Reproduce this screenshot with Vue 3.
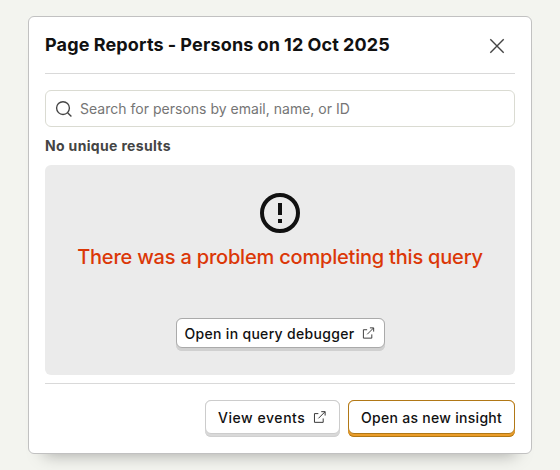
<script setup>
const title = 'Page Reports - Persons on 12 Oct 2025'
</script>

<template>
  <div class="page">
    <section class="modal" role="dialog" :aria-label="title">
      <header class="head">
        <h3>{{ title }}</h3>
        <button class="close" aria-label="close">
          <svg viewBox="0 0 24 24" width="24" height="24" fill="none" stroke="currentColor" stroke-width="1.4">
            <path d="M5.3 5.3l13.4 13.4M18.7 5.3l-13.4 13.4" />
          </svg>
        </button>
      </header>
      <label class="search">
        <svg viewBox="0 0 18 18" width="18" height="18" fill="none" stroke="currentColor" stroke-width="1.35">
          <circle cx="8" cy="8.1" r="6.4" />
          <path d="M12.6 12.7l3.8 3.8" />
        </svg>
        <input type="text" placeholder="Search for persons by email, name, or ID" />
      </label>
      <div class="count">No unique results</div>
      <div class="error">
        <svg class="warn" viewBox="0 0 40 40" width="40" height="40">
          <circle cx="20" cy="20" r="18" fill="none" stroke="#111" stroke-width="4" />
          <path d="M18 10h4v12h-4zM18 26h4v4h-4z" fill="#111" />
        </svg>
        <h2>There was a problem completing this query</h2>
        <button class="btn small">
          <span class="face">
            <span>Open in query debugger</span>
            <svg viewBox="0 0 14 14" width="14" height="14" fill="none" stroke="currentColor" stroke-width="1">
              <path d="M5.5 3.5h-4v9h9V8.5M8.5 1.5h4v4M12.3 1.7L5.6 8.4" />
            </svg>
          </span>
        </button>
      </div>
      <footer class="foot">
        <button class="btn">
          <span class="face">
            <span>View events</span>
            <svg viewBox="0 0 14 14" width="14" height="14" fill="none" stroke="currentColor" stroke-width="1">
              <path d="M5.5 3.5h-4v9h9V8.5M8.5 1.5h4v4M12.3 1.7L5.6 8.4" />
            </svg>
          </span>
        </button>
        <button class="btn primary">
          <span class="face"><span>Open as new insight</span></span>
        </button>
      </footer>
    </section>
  </div>
</template>

<style>
body {
  background: #f3f4ef;
}
</style>

<style scoped>
.page {
  box-sizing: border-box;
  height: 470px;
  padding: 16px 28px;
  overflow: hidden;
  font-family: Inter, sans-serif;
  color: #111;
}
.page * {
  box-sizing: border-box;
}
.modal {
  height: 438px;
  padding: 0 16px;
  background: #fff;
  border: 1px solid #c1c1c1;
  border-radius: 6px;
  box-shadow: 0 16px 16px -16px rgba(0, 0, 0, 0.35);
}
.head {
  display: flex;
  align-items: center;
  justify-content: space-between;
  height: 57px;
  padding-right: 6px;
  border-bottom: 1px solid #d9d9d9;
}
h3 {
  margin: 0;
  font-size: 18px;
  font-weight: 700;
  line-height: 24px;
  letter-spacing: 0.18px;
  word-spacing: -0.5px;
  white-space: nowrap;
}
.close {
  display: flex;
  padding: 0;
  margin-top: 2px;
  border: 0;
  background: none;
  color: #444;
}
.search {
  display: flex;
  align-items: center;
  gap: 7px;
  height: 37px;
  margin-top: 16px;
  padding: 0 9px;
  border: 1px solid #dadbd2;
  border-radius: 6px;
  color: #444;
}
.search input {
  flex: 1;
  padding: 0;
  border: 0;
  outline: 0;
  background: none;
  font: 400 14px/20px Inter, sans-serif;
  letter-spacing: 0.015px;
}
.search input::placeholder {
  color: #757575;
  opacity: 1;
}
.count {
  margin: 8px 0 9px;
  font-size: 14px;
  font-weight: 700;
  line-height: 21px;
  letter-spacing: 0.34px;
  color: #444;
}
.error {
  display: flex;
  flex-direction: column;
  align-items: center;
  height: 210px;
  padding-top: 28px;
  border-radius: 6px;
  background: #ebebeb;
}
h2 {
  margin: 10px 0 47px;
  font-size: 20px;
  font-weight: 500;
  line-height: 28px;
  letter-spacing: -0.2px;
  white-space: nowrap;
  color: #db3707;
}
.foot {
  display: flex;
  justify-content: flex-end;
  gap: 8px;
  margin-top: 8px;
  padding-top: 16px;
  border-top: 1px solid #d9d9d9;
}
.btn {
  height: 37px;
  padding: 0 0 3px;
  border: 0;
  border-radius: 6px;
  background: #d9d9d9;
  box-shadow: inset 0 -1px 0 #d0d0d0;
  font: 500 14px/20px Inter, sans-serif;
  letter-spacing: 0.29px;
  color: #111;
}
.face {
  display: flex;
  align-items: center;
  gap: 8px;
  height: 34px;
  padding: 1px 12px 0;
  border: 1px solid #ccc;
  border-radius: 6px;
  background: #fff;
  white-space: nowrap;
}
.face svg {
  color: #333;
  margin-top: -1px;
}
.foot .btn:first-child {
  width: 135px;
  letter-spacing: 0.55px;
}
.small {
  width: 209px;
  height: 33px;
  background: #d0d0d0;
  letter-spacing: 0.31px;
}
.small .face {
  height: 30px;
  padding: 1px 8px 0;
  border-color: #aaa;
}
.primary {
  width: 167px;
  background: #eb9d2a;
  box-shadow: inset 0 -1px 0 #b17816;
}
.primary .face {
  border-color: #b17816;
}
</style>
